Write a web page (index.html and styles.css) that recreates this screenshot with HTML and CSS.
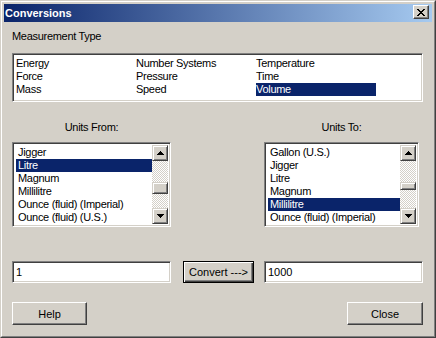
FILE: index.html
```html
<!DOCTYPE html>
<html lang="en">
<head>
    <meta charset="UTF-8">
    <meta name="viewport" content="width=device-width, initial-scale=1.0">
    <link rel="stylesheet" href="styles.css">
    <title>Conversions</title>
</head>
<body>
<div class="window">
    <div class="frame">
        <div class="titlebar">
            <span class="title">Conversions</span>
            <button class="title-close" aria-label="Close">
                <svg width="8" height="7" viewBox="0 0 8 7" shape-rendering="crispEdges">
                    <rect x="0" y="0" width="2" height="1"/><rect x="6" y="0" width="2" height="1"/>
                    <rect x="1" y="1" width="2" height="1"/><rect x="5" y="1" width="2" height="1"/>
                    <rect x="2" y="2" width="4" height="1"/>
                    <rect x="3" y="3" width="2" height="1"/>
                    <rect x="2" y="4" width="4" height="1"/>
                    <rect x="1" y="5" width="2" height="1"/><rect x="5" y="5" width="2" height="1"/>
                    <rect x="0" y="6" width="2" height="1"/><rect x="6" y="6" width="2" height="1"/>
                </svg>
            </button>
        </div>

        <div class="content">
            <div class="label">Measurement Type</div>
            <div class="sunken type-list">
                <ul class="type-grid">
                    <li>Energy</li>
                    <li>Force</li>
                    <li>Mass</li>
                    <li>Number Systems</li>
                    <li>Pressure</li>
                    <li>Speed</li>
                    <li>Temperature</li>
                    <li>Time</li>
                    <li class="selected">Volume</li>
                </ul>
            </div>

            <div class="units-row">
                <div class="units units-from">
                    <div class="label">Units From:</div>
                    <div class="sunken unit-list">
                        <ul class="items">
                            <li>Jigger</li>
                            <li class="selected">Litre</li>
                            <li>Magnum</li>
                            <li>Millilitre</li>
                            <li>Ounce (fluid) (Imperial)</li>
                            <li>Ounce (fluid) (U.S.)</li>
                        </ul>
                        <div class="scrollbar">
                            <div class="scroll-btn">
                                <svg width="7" height="4" viewBox="0 0 7 4" shape-rendering="crispEdges">
                                    <rect x="3" y="0" width="1" height="1"/><rect x="2" y="1" width="3" height="1"/>
                                    <rect x="1" y="2" width="5" height="1"/><rect x="0" y="3" width="7" height="1"/>
                                </svg>
                            </div>
                            <div class="track"><div class="thumb"></div></div>
                            <div class="scroll-btn">
                                <svg width="7" height="4" viewBox="0 0 7 4" shape-rendering="crispEdges">
                                    <rect x="0" y="0" width="7" height="1"/><rect x="1" y="1" width="5" height="1"/>
                                    <rect x="2" y="2" width="3" height="1"/><rect x="3" y="3" width="1" height="1"/>
                                </svg>
                            </div>
                        </div>
                    </div>
                </div>

                <div class="units units-to">
                    <div class="label">Units To:</div>
                    <div class="sunken unit-list">
                        <ul class="items">
                            <li>Gallon (U.S.)</li>
                            <li>Jigger</li>
                            <li>Litre</li>
                            <li>Magnum</li>
                            <li class="selected">Millilitre</li>
                            <li>Ounce (fluid) (Imperial)</li>
                        </ul>
                        <div class="scrollbar">
                            <div class="scroll-btn">
                                <svg width="7" height="4" viewBox="0 0 7 4" shape-rendering="crispEdges">
                                    <rect x="3" y="0" width="1" height="1"/><rect x="2" y="1" width="3" height="1"/>
                                    <rect x="1" y="2" width="5" height="1"/><rect x="0" y="3" width="7" height="1"/>
                                </svg>
                            </div>
                            <div class="track"><div class="thumb thumb-small"></div></div>
                            <div class="scroll-btn">
                                <svg width="7" height="4" viewBox="0 0 7 4" shape-rendering="crispEdges">
                                    <rect x="0" y="0" width="7" height="1"/><rect x="1" y="1" width="5" height="1"/>
                                    <rect x="2" y="2" width="3" height="1"/><rect x="3" y="3" width="1" height="1"/>
                                </svg>
                            </div>
                        </div>
                    </div>
                </div>
            </div>

            <div class="convert-row">
                <input class="edit edit-from" type="text" value="1">
                <button class="btn btn-default">Convert ---&gt;</button>
                <input class="edit edit-to" type="text" value="1000">
            </div>

            <div class="button-row">
                <button class="btn btn-help">Help</button>
                <button class="btn btn-close">Close</button>
            </div>
        </div>
    </div>
</div>
</body>
</html>
```

FILE: styles.css
```css
/* Global */
* {
    box-sizing: border-box;
}

body {
    margin: 0;
    background: #d4d0c8;
    font: 11px "Liberation Sans", Arial, sans-serif;
    letter-spacing: -0.3px;
    color: #000;
}

ul {
    list-style: none;
    margin: 0;
    padding: 0;
}

/* Window frame */
.window {
    width: 436px;
    height: 338px;
    border: 1px solid;
    border-color: #d4d0c8 #404040 #404040 #d4d0c8;
}

.frame {
    height: 100%;
    border: 1px solid;
    border-color: #fff #808080 #808080 #fff;
    padding: 2px;
    display: flex;
    flex-direction: column;
}

.titlebar {
    height: 18px;
    display: flex;
    align-items: flex-start;
    justify-content: space-between;
    padding: 0 3px 0 1px;
    background: linear-gradient(to right, #0a246a, #a6caf0);
}

.title {
    color: #fff;
    font-weight: bold;
    letter-spacing: 0;
    line-height: 18px;
}

.title-close {
    width: 16px;
    height: 14px;
    margin-top: 1px;
    padding: 0;
    display: flex;
    align-items: center;
    justify-content: center;
    background: #d4d0c8;
    border: 1px solid;
    border-color: #fff #404040 #404040 #fff;
    box-shadow: inset -1px -1px #808080;
}

/* Content */
.content {
    flex: 1;
    padding: 8px 9px 0 8px;
    display: flex;
    flex-direction: column;
}

.label {
    line-height: 13px;
}

.sunken {
    background: #fff;
    border: 1px solid;
    border-color: #808080 #fff #fff #808080;
    box-shadow: inset 1px 1px #404040, inset -1px -1px #d4d0c8;
}

.type-list {
    margin-top: 10px;
    height: 49px;
    padding: 3px 0 0 3px;
}

.type-grid {
    display: grid;
    grid-template-columns: repeat(3, 120px);
    grid-template-rows: repeat(3, 13px);
    grid-auto-flow: column;
}

.type-grid li,
.items li {
    line-height: 13px;
    white-space: nowrap;
}

.selected {
    background: #0a246a;
    color: #fff;
}

/* Unit lists */
.units-row {
    margin-top: 19px;
    padding-right: 4px;
    display: flex;
    justify-content: space-between;
}

.units {
    display: flex;
    flex-direction: column;
    align-items: center;
}

.unit-list {
    margin-top: 8px;
    height: 85px;
    padding: 2px;
    display: flex;
    overflow: hidden;
}

.units-from .unit-list {
    width: 159px;
}

.units-to .unit-list {
    width: 155px;
}

.items {
    flex: 1;
    padding: 1px 0 0 1px;
    overflow: hidden;
}

.items li {
    padding-left: 2px;
}

.scrollbar {
    width: 16px;
    display: flex;
    flex-direction: column;
}

.scroll-btn,
.thumb {
    background: #d4d0c8;
    border: 1px solid;
    border-color: #d4d0c8 #404040 #404040 #d4d0c8;
    box-shadow: inset 1px 1px #fff, inset -1px -1px #808080;
}

.scroll-btn {
    height: 16px;
    display: flex;
    align-items: center;
    justify-content: center;
}

.track {
    flex: 1;
    background: repeating-conic-gradient(#d4d0c8 0 25%, #fff 0 50%) 0 0 / 2px 2px;
}

.thumb {
    margin-top: 21px;
    height: 12px;
}

.thumb-small {
    height: 8px;
}

/* Convert row */
.convert-row {
    margin-top: 34px;
    display: flex;
    align-items: center;
}

.edit {
    height: 22px;
    padding: 0 3px;
    font: inherit;
    color: #000;
    background: #fff;
    border: 1px solid;
    border-color: #808080 #fff #fff #808080;
    box-shadow: inset 1px 1px #404040, inset -1px -1px #d4d0c8;
    outline: 0;
}

.edit-from {
    width: 159px;
}

.edit-to {
    width: 159px;
    margin-left: 10px;
}

/* Buttons */
.btn {
    height: 23px;
    padding: 0;
    font: inherit;
    color: #000;
    background: #d4d0c8;
    border: 1px solid;
    border-color: #fff #404040 #404040 #fff;
    box-shadow: inset -1px -1px #808080;
}

.btn-default {
    width: 71px;
    height: 22px;
    margin-left: 12px;
    border-color: #000;
    box-shadow: inset 1px 1px #fff, inset -1px -1px #404040, inset -2px -2px #808080;
}

.button-row {
    margin-top: 19px;
    display: flex;
    justify-content: space-between;
}

.btn-help {
    width: 75px;
}

.btn-close {
    width: 76px;
}
```
